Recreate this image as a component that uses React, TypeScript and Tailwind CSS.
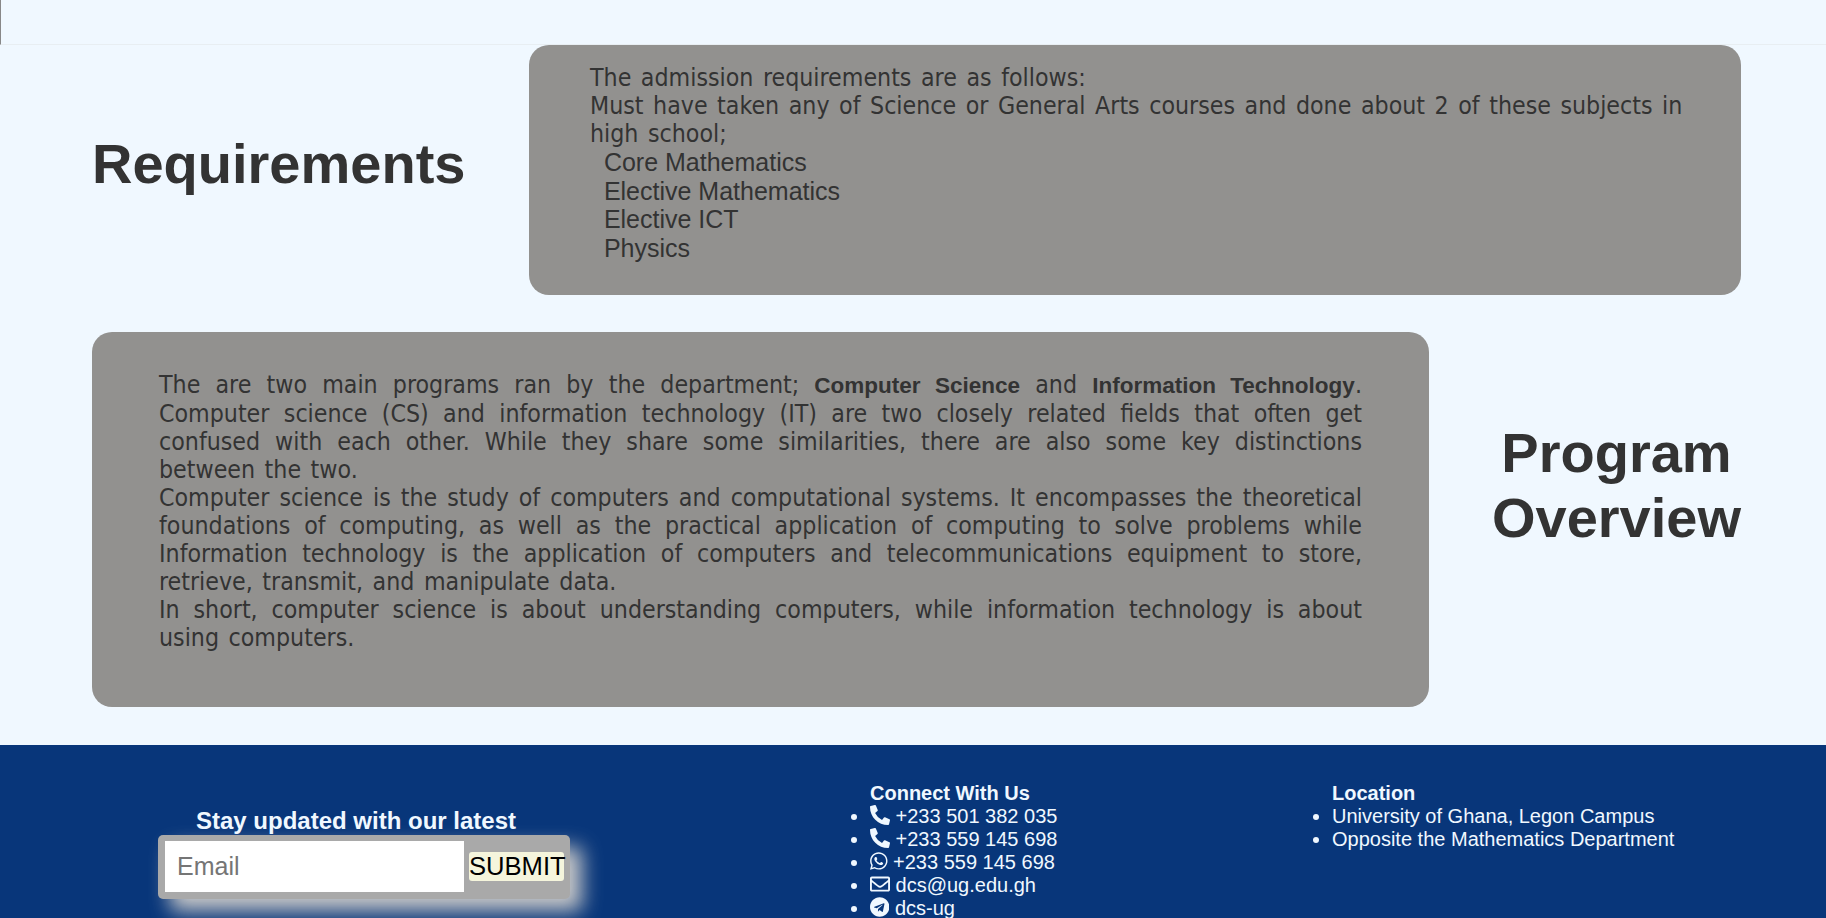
import React from "react";
import { FaPhoneAlt, FaRegEnvelope, FaTelegram, FaWhatsapp } from "react-icons/fa";

const App = () => {
  return (
    <div className="h-[918px] overflow-hidden bg-[#f0f8ff] font-['Liberation_Sans',Arial,sans-serif] text-[#333]">
      <header className="h-[45px] border-b border-[#e8eef2] border-l border-l-[#888]" />

      <section className="flex h-[287px] pl-[92px] pr-[85px]">
        <div className="flex h-[238px] w-[437px] items-center">
          <h2 className="text-[56px] leading-[64px] font-bold">Requirements</h2>
        </div>
        <div className="h-[250px] w-[1212px] rounded-[20px] bg-[#92918f] pl-[61px] pr-[55px] pt-[19px]">
          <p className="font-['DejaVu_Sans_Condensed','DejaVu_Sans',sans-serif] text-[24.7px] leading-[28px] [word-spacing:2.5px]">
            The admission requirements are as follows:
            <br />
            Must have taken any of Science or General Arts courses and done about 2 of these subjects in high school;
          </p>
          <p className="text-[25px] leading-[28.7px]">
            &nbsp;&nbsp;Core Mathematics
            <br />
            &nbsp;&nbsp;Elective Mathematics
            <br />
            &nbsp;&nbsp;Elective ICT
            <br />
            &nbsp;&nbsp;Physics
          </p>
        </div>
      </section>

      <section className="flex h-[413px] pl-[92px] pr-[85px]">
        <div className="h-[375px] w-[1337px] rounded-[20px] bg-[#92918f] px-[67px] pt-[39px]">
          <p className="text-justify font-['DejaVu_Sans_Condensed','DejaVu_Sans',sans-serif] text-[24.7px] leading-[28px] [word-spacing:2.5px]">
            The are two main programs ran by the department;{" "}
            <b className="font-['Liberation_Sans',sans-serif] text-[22.5px] leading-[29px]">Computer Science</b> and{" "}
            <b className="font-['Liberation_Sans',sans-serif] text-[22.5px] leading-[29px]">Information Technology</b>.
            Computer science (CS) and information technology (IT) are two closely related fields that often get
            confused with each other. While they share some similarities, there are also some key distinctions between
            the two.
            <br />
            Computer science is the study of computers and computational systems. It encompasses the theoretical
            foundations of computing, as well as the practical application of computing to solve problems while
            Information technology is the application of computers and telecommunications equipment to store, retrieve,
            transmit, and manipulate data.
            <br />
            In short, computer science is about understanding computers, while information technology is about using
            computers.
          </p>
        </div>
        <div className="flex h-[306px] flex-1 items-center justify-center pl-[63px]">
          <h2 className="text-center text-[56px] leading-[65px] font-bold">
            Program
            <br />
            Overview
          </h2>
        </div>
      </section>

      <footer className="flex h-[173px] bg-[#08367a] text-[20px] leading-[23px] text-[#f0f8ff]">
        <div className="w-[830px] pl-[158px] pt-[62px]">
          <h3 className="pl-[38px] text-[24px] leading-[28px] font-bold">Stay updated with our latest</h3>
          <form className="flex h-[64px] w-[412px] items-center rounded-[5px] bg-[#a9a9a9] pb-[1px] pl-[7px] shadow-[12px_12px_20px_#c8c8c8]">
            <input
              placeholder="Email"
              className="h-[51px] w-[299px] bg-white px-[12px] text-[25px] text-black outline-none placeholder:text-[#757575]"
            />
            <button
              type="button"
              className="ml-[5px] h-[29px] w-[95px] rounded-[3px] bg-[#f5f5dc] text-center text-[25.6px] leading-[29px] text-black"
            >
              SUBMIT
            </button>
          </form>
        </div>

        <div className="w-[462px] pt-[37px]">
          <ul className="list-disc pl-[40px]">
            <h3 className="font-bold">Connect With Us</h3>
            <li>
              <FaPhoneAlt className="inline-block h-[20px] w-[20px] align-[-2px]" /> +233 501 382 035
            </li>
            <li>
              <FaPhoneAlt className="inline-block h-[20px] w-[20px] align-[-2px]" /> +233 559 145 698
            </li>
            <li>
              <FaWhatsapp className="inline-block h-[20px] w-[17.5px] align-[-2px]" /> +233 559 145 698
            </li>
            <li>
              <FaRegEnvelope className="inline-block h-[20px] w-[20px] align-[-2px]" /> dcs@ug.edu.gh
            </li>
            <li>
              <FaTelegram className="inline-block h-[20px] w-[19.4px] align-[-2px]" /> dcs-ug
            </li>
          </ul>
        </div>

        <div className="flex-1 pt-[37px]">
          <ul className="list-disc pl-[40px]">
            <h3 className="font-bold">Location</h3>
            <li>University of Ghana, Legon Campus</li>
            <li>Opposite the Mathematics Department</li>
          </ul>
        </div>
      </footer>
    </div>
  );
};

export default App;
